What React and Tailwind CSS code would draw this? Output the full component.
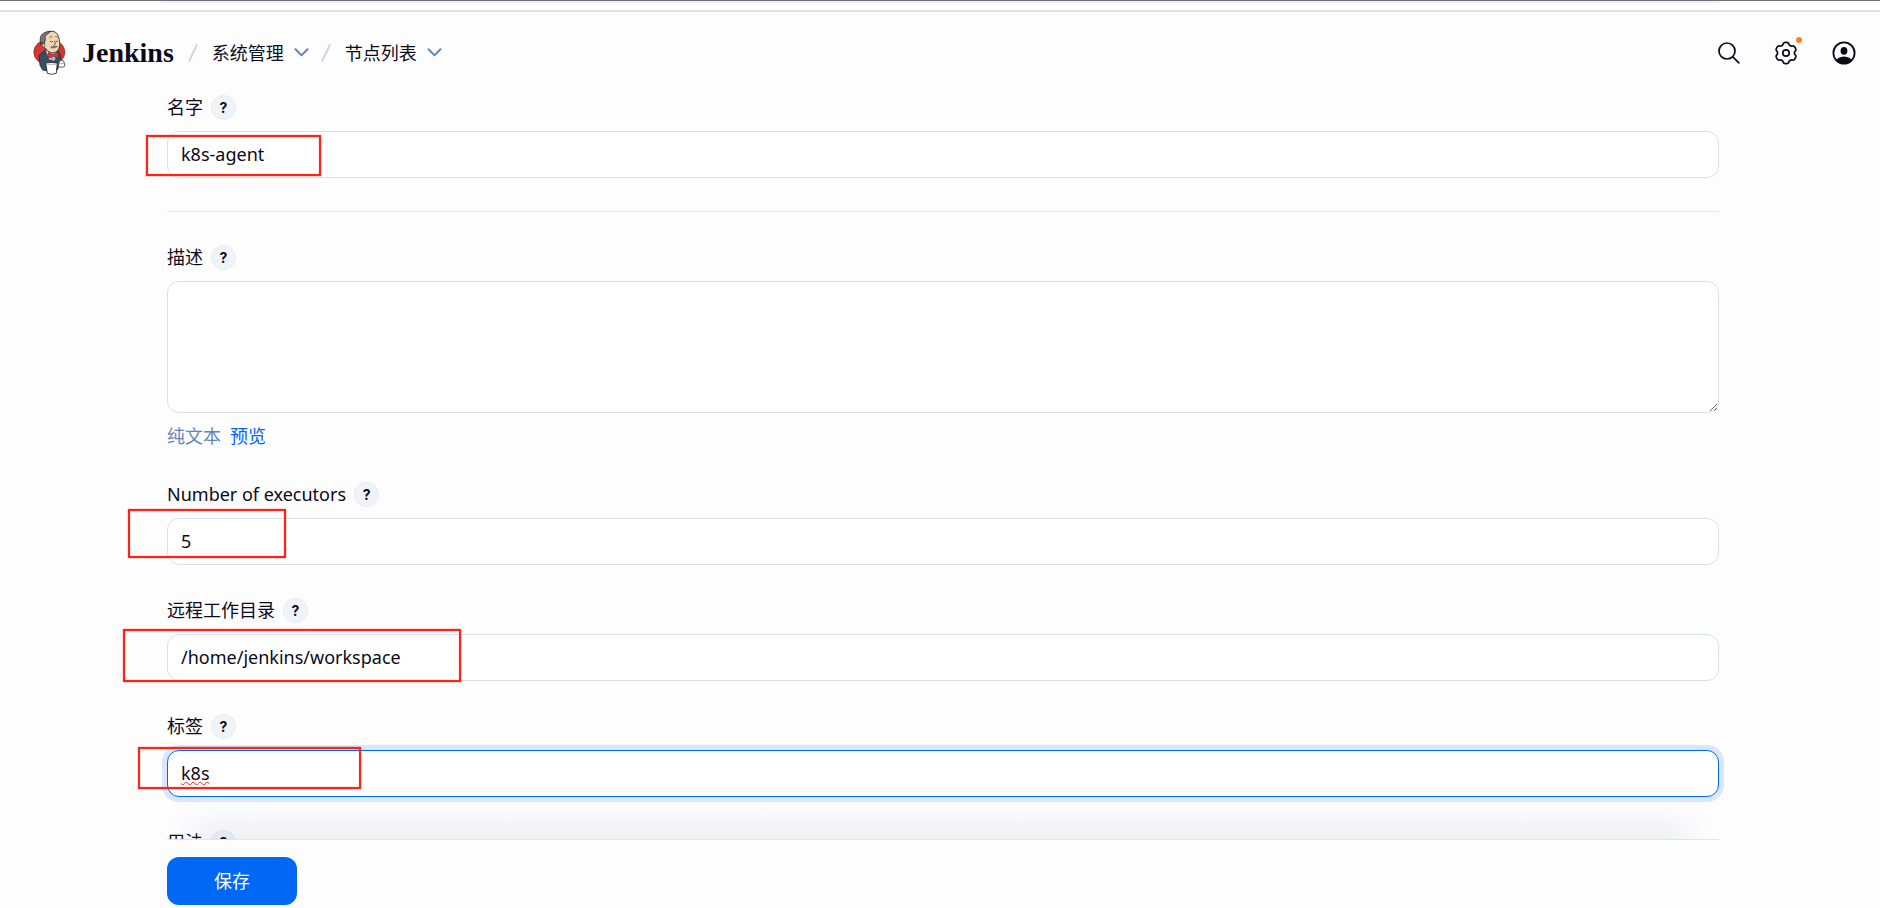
import React from "react";

const GEAR_PATH = (() => {
  const points = [];
  for (let i = 0; i < 144; i += 1) {
    const angle = (i / 144) * Math.PI * 2;
    const r = 9.5 + 1.1 * Math.tanh(2 * (Math.cos(6 * angle + Math.PI) + 0.25));
    points.push(`${(12 + r * Math.cos(angle)).toFixed(2)} ${(12 + r * Math.sin(angle)).toFixed(2)}`);
  }
  return `M${points.join("L")}Z`;
})();

function JenkinsLogo() {
  return (
    <svg viewBox="37 31 99 136" className="h-[45px] w-[33px] shrink-0" aria-hidden="true">
      <ellipse cx="86" cy="98" rx="47" ry="39" fill="#d33833" stroke="#8e2420" strokeWidth="2" />
      <path d="M55 108 Q64 98 76 92 L112 94 L119 104 L121 126 L110 152 Q88 160 66 152 L58 138 Z" fill="#335061" stroke="#1d2b36" strokeWidth="2.5" />
      <path d="M74 92 L86 122 L104 122 L110 94 Z" fill="#f5f5f5" stroke="#1d2b36" strokeWidth="1.5" />
      <path d="M70 48 Q80 33 97 35 Q114 39 116 60 Q120 77 115 88 Q108 101 92 100 Q79 97 74 86 Q64 84 64 74 Z" fill="#f0d6b7" stroke="#231f20" strokeWidth="2.5" />
      <path d="M90 35 Q68 35 60 50 Q56 62 60 74 L66 68 L70 76 L74 60 L73 50 Q80 44 90 35 Z" fill="#77757a" stroke="#231f20" strokeWidth="2" />
      <path d="M64 73 Q69 69 72 76 L71 84 Q63 83 64 73 Z" fill="#f0d6b7" stroke="#231f20" strokeWidth="1.5" />
      <path d="M86 54 Q90 49 95 52 M104 51 Q109 49 112 54" fill="none" stroke="#231f20" strokeWidth="1.8" />
      <path d="M88 65 Q92 69 97 65 M105 64 Q109 68 112 64 M101 64 Q108 75 99 77" fill="none" stroke="#231f20" strokeWidth="2" />
      <path d="M90 83 Q99 77 111 81 Q105 86 99 85 Q95 88 90 83 Z" fill="#8d857e" stroke="#231f20" strokeWidth="1" />
      <path d="M82 99 L97 104 L112 98 L113 116 L98 111 L83 116 Z" fill="#d33833" stroke="#8e1f1c" strokeWidth="2" />
      <circle cx="98" cy="118" r="7" fill="#b7ccd9" stroke="#335061" strokeWidth="2" />
      <path d="M95 115 L101 121 M101 115 L95 121" stroke="#6d97ad" strokeWidth="1.5" />
      <path d="M116 128 Q117 121 123 123 Q130 121 131 130 L133 140 Q125 147 113 142 Z" fill="#ffffff" stroke="#3f3f43" strokeWidth="2.5" />
      <path d="M119 131 Q124 136 130 131" fill="none" stroke="#77777a" strokeWidth="2" />
      <path d="M75 131 Q92 127 110 131 L107 162 Q92 168 80 162 Z" fill="#ffffff" stroke="#231f20" strokeWidth="2.5" />
      <path d="M76 134 Q92 138 109 134" fill="none" stroke="#9a9a9d" strokeWidth="2" />
    </svg>
  );
}

function Crumb({ children }) {
  return (
    <li className="flex items-center">
      <svg viewBox="0 0 10 18" className="mr-[14px] h-[18px] w-[10px]" fill="none" stroke="#c9d6e6" strokeWidth="1.9" aria-hidden="true">
        <path d="M9 0.5 1 17.5" />
      </svg>
      <a href="#" className="text-[18px] leading-[26px]">{children}</a>
      <button type="button" aria-label={`${children} 菜单`} className="ml-[10px] mr-[12px]">
        <svg viewBox="0 0 15 9" className="h-[9px] w-[15px]" fill="none" stroke="#6485b6" strokeWidth="2" strokeLinecap="round" strokeLinejoin="round" aria-hidden="true">
          <path d="M1.5 1.2 7.5 7.4 13.5 1.2" />
        </svg>
      </button>
    </li>
  );
}

function FieldLabel({ htmlFor, children }) {
  return (
    <div className="flex h-[25px] items-center gap-2">
      <label htmlFor={htmlFor} className="text-[18px] leading-[25px]">{children}</label>
      <button
        type="button"
        aria-label="帮助"
        className="flex size-[25px] items-center justify-center rounded-full border border-[#e6ecf1] bg-[#f0f4f8] font-['Inter',sans-serif] text-[14px] font-bold leading-none"
      >
        ?
      </button>
    </div>
  );
}

const inputClass =
  "block h-[47px] w-full rounded-xl border border-[#d9e0ec] bg-white px-[13px] pb-[2px] text-[18px] outline-none";

function Mark({ className }) {
  return (
    <span
      aria-hidden="true"
      className={`pointer-events-none absolute border-2 border-[#fb2416] shadow-[0_0_1px_#fb2416,inset_0_0_1px_#fb2416] ${className}`}
    />
  );
}

function TextField({ id, label, value, mark, className = "" }) {
  return (
    <div>
      <FieldLabel htmlFor={id}>{label}</FieldLabel>
      <div className="relative mt-[11px]">
        <input id={id} type="text" defaultValue={value} spellCheck={false} className={`${inputClass} ${className}`} />
        <Mark className={mark} />
      </div>
    </div>
  );
}

export default function App() {
  return (
    <div className="flex h-screen flex-col bg-[#fdfdfe] font-['Noto_Sans','Noto_Sans_CJK_SC',sans-serif] text-[#0b0a1a]">
      <div className="h-3 shrink-0 border-b-2 border-t border-b-[#e0e0e1] border-t-[#6f6d75] bg-white px-40">
        <div className="h-[2px] rounded-b-full bg-[#edf0fa]" />
      </div>

      <header className="flex h-[83px] shrink-0 items-center justify-between pb-[2px] pl-[33px] pr-6">
        <nav className="flex items-center" aria-label="导航">
          <a href="#" className="mr-[14px] flex items-center gap-4">
            <JenkinsLogo />
            <span className="font-['Liberation_Serif',serif] text-[28px] font-bold leading-8">Jenkins</span>
          </a>
          <ol className="flex items-center">
            <Crumb>系统管理</Crumb>
            <Crumb>节点列表</Crumb>
          </ol>
        </nav>
        <div className="flex items-center gap-[34px]">
          <button type="button" aria-label="搜索">
            <svg viewBox="0 0 22 22" className="size-[22px]" fill="none" stroke="currentColor" strokeWidth="1.7" strokeLinecap="round">
              <circle cx="9" cy="9" r="8" />
              <path d="M14.8 14.8 20.8 20.8" />
            </svg>
          </button>
          <button type="button" aria-label="设置" className="relative">
            <svg viewBox="0 0 24 24" className="size-6" fill="none" stroke="currentColor" strokeWidth="1.7" strokeLinejoin="round">
              <path d={GEAR_PATH} />
              <circle cx="12" cy="12" r="3.2" />
            </svg>
            <span className="absolute -right-1 -top-1 size-[6px] rounded-full bg-[#ff7f1c]" />
          </button>
          <button type="button" aria-label="用户">
            <svg viewBox="0 0 24 24" className="size-6">
              <defs>
                <clipPath id="avatar-ring">
                  <circle cx="12" cy="12" r="11" />
                </clipPath>
              </defs>
              <circle cx="12" cy="12" r="10.6" fill="none" stroke="currentColor" strokeWidth="1.8" />
              <ellipse cx="12" cy="9.9" rx="3.4" ry="3.8" fill="currentColor" />
              <ellipse cx="12" cy="21" rx="8" ry="5.6" fill="currentColor" clipPath="url(#avatar-ring)" />
            </svg>
          </button>
        </div>
      </header>

      <main className="min-h-0 flex-1 overflow-y-auto pl-[167px] pr-[161px] [scrollbar-width:none]">
        <form id="node-form" className="flex flex-col gap-[33px]">
          <TextField id="name" label="名字" value="k8s-agent" mark="-left-[21px] top-1 h-[41px] w-[175px]" />
          <hr className="border-[#e1e6ee]" />
          <div>
            <FieldLabel htmlFor="description">描述</FieldLabel>
            <textarea
              id="description"
              className="mt-[11px] block h-[132px] w-full resize-y rounded-xl border border-[#d9e0ec] bg-white px-[13px] py-2 text-[18px] outline-none"
            />
            <div className="flex gap-[9px] pt-[10px] text-[18px] leading-[26px]">
              <span className="text-[#6485b6]">纯文本</span>
              <a href="#" className="text-[#0068f5]">预览</a>
            </div>
          </div>
          <TextField id="executors" label="Number of executors" value="5" mark="-left-[39px] -top-[9px] h-[49px] w-[158px]" />
          <TextField id="remote" label="远程工作目录" value="/home/jenkins/workspace" mark="-left-11 -top-[5px] h-[53px] w-[338px]" />
          <TextField
            id="labels"
            label="标签"
            value="k8s"
            mark="-left-[29px] -top-[3px] h-[42px] w-[223px]"
            className="border-[#0068f5]! ring-5 ring-[#d9e6fc] underline decoration-[#fb2416] decoration-wavy decoration-1"
          />
          <div>
            <FieldLabel htmlFor="usage">用法</FieldLabel>
            <select id="usage" className={`${inputClass} mt-[11px]`}>
              <option>尽可能的使用这个节点</option>
            </select>
          </div>
        </form>
      </main>

      <footer className="relative shrink-0 pl-[167px] pr-[161px]">
        <div className="pointer-events-none absolute inset-x-[171px] bottom-full h-[38px] bg-linear-to-t from-[#1e325f]/6 to-transparent mask-x-from-[calc(100%-44px)] mask-x-to-100%" />
        <div className="border-t border-[#dfe4ee] pb-[3px] pt-[17px]">
          <button
            type="submit"
            form="node-form"
            className="h-[48px] w-[130px] rounded-xl bg-[#0068f5] text-[18px] text-white"
          >
            保存
          </button>
        </div>
      </footer>
    </div>
  );
}
